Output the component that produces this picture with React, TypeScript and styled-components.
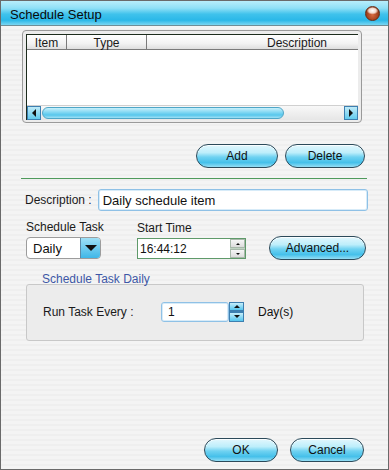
import React from 'react'
import styled, { createGlobalStyle } from 'styled-components'

const GlobalStyle = createGlobalStyle`
  html, body {
    margin: 0;
    padding: 0;
    background: #ffffff;
  }
  * {
    box-sizing: border-box;
  }
`

const Window = styled.div`
  width: 389px;
  height: 470px;
  display: flex;
  flex-direction: column;
  border: 1px solid #6a6a6a;
  font-family: 'Liberation Sans', Arial, sans-serif;
  font-size: 12px;
  color: #111;
  background: repeating-linear-gradient(
    180deg,
    #f4f4f4 0px,
    #f4f4f4 3px,
    #efefef 3px,
    #efefef 5px
  );
  overflow: hidden;
`

const TitleBar = styled.div`
  height: 25px;
  flex: none;
  display: flex;
  align-items: center;
  justify-content: space-between;
  padding: 2px 8px 0 9px;
  background: linear-gradient(
    180deg,
    #b8eefb 0%,
    #8fe0f6 30%,
    #3fc2ec 55%,
    #2bb8e8 80%,
    #7ad6f2 100%
  );
  border-bottom: 1px solid #6e8d96;
  font-size: 13px;
  color: #0a0a0a;
`

const CloseOrb = styled.div`
  width: 15px;
  height: 15px;
  border-radius: 50%;
  margin-top: -1px;
  background: radial-gradient(
      ellipse 6px 4px at 50% 28%,
      #ffffff 0%,
      #f3d9cc 60%,
      transparent 100%
    ),
    radial-gradient(circle at 50% 62%, #d86a40 0%, #a0401c 55%, #5e200c 100%);
  border: 1px solid #6a2c14;
`

const ListFrame = styled.div`
  margin: 4px 0 0 21px;
  width: 340px;
  height: 93px;
  padding: 3px 3px 2px 3px;
  border: 1px solid #9a9a9a;
  border-radius: 4px;
  background: #ececec;
  display: flex;
  flex-direction: column;
`

const ListInner = styled.div`
  flex: 1;
  display: flex;
  flex-direction: column;
  background: #fff;
  border-left: 1px solid #1c2b1c;
  border-top: 1px solid #1c2b1c;
  overflow: hidden;
`

const HeaderRow = styled.div`
  height: 15px;
  display: flex;
  background: linear-gradient(180deg, #ffffff 0%, #f2f2f2 60%, #dedede 100%);
  border-bottom: 1px solid #7a7a7a;
`

const HeaderCell = styled.div<{ w: number }>`
  width: ${(p) => p.w}px;
  flex: none;
  display: flex;
  align-items: flex-end;
  justify-content: center;
  line-height: 12px;
  border-right: 1px solid #7a7a7a;
  color: #1a1a1a;
  &:last-child {
    border-right: none;
  }
`

const ListBody = styled.div`
  flex: 1;
`

const ScrollBar = styled.div`
  height: 15px;
  display: flex;
  align-items: stretch;
  background: linear-gradient(180deg, #f8f8f8, #e6e6e6);
  border-top: 1px solid #d0d0d0;
`

const ArrowBtn = styled.div`
  width: 14px;
  display: flex;
  align-items: center;
  justify-content: center;
  background: linear-gradient(180deg, #bfeaf8, #62cbee);
  border: 1px solid #3d7fb0;
`

const Thumb = styled.div`
  width: 242px;
  margin: 1px 0 1px 1px;
  border-radius: 7px;
  border: 1px solid #4fa6c7;
  background: linear-gradient(180deg, #c9f0fb 0%, #7fd6f2 45%, #57c7ec 70%, #9fe0f5 100%);
`

const Track = styled.div`
  flex: 1;
`

const ButtonRow = styled.div`
  display: flex;
  justify-content: flex-end;
  gap: 7px;
  margin: 21px 23px 0 0;
`

const PillButton = styled.button<{ w: number }>`
  width: ${(p) => p.w}px;
  height: 24px;
  padding: 0;
  border: 1px solid #2c4a5a;
  border-radius: 12px;
  font-family: 'Liberation Sans', Arial, sans-serif;
  font-size: 12px;
  color: #111;
  background: linear-gradient(
    180deg,
    #e3f7fd 0%,
    #bdeefb 35%,
    #6fd2f1 55%,
    #45c0ea 80%,
    #94def5 100%
  );
  box-shadow: inset 0 1px 0 rgba(255, 255, 255, 0.8);
`

const Divider = styled.div`
  margin: 10px 21px 0 20px;
  height: 1px;
  background: #4f9a5c;
`

const DescRow = styled.div`
  display: flex;
  align-items: center;
  margin: 10px 20px 0 24px;
  gap: 6px;
`

const Label = styled.span`
  color: #1a1a1a;
  white-space: nowrap;
`

const TextInput = styled.div`
  flex: 1;
  height: 22px;
  display: flex;
  align-items: center;
  padding-left: 4px;
  background: #fff;
  border: 1px solid #8fc1e6;
  border-radius: 3px;
  box-shadow: inset 0 0 0 1px #d7ebf8;
  font-size: 13px;
`

const TaskRow = styled.div`
  display: flex;
  align-items: flex-end;
  margin: 9px 0 0 25px;
`

const Field = styled.div<{ w: number }>`
  width: ${(p) => p.w}px;
  display: flex;
  flex-direction: column;
  gap: 3px;
`

const Combo = styled.div`
  width: 75px;
  height: 22px;
  display: flex;
  border: 1px solid #9c9c9c;
  border-radius: 4px;
  background: #fff;
  overflow: hidden;
`

const ComboText = styled.div`
  flex: 1;
  display: flex;
  align-items: center;
  padding-left: 6px;
  font-size: 13px;
`

const ComboDrop = styled.div`
  width: 20px;
  display: flex;
  align-items: center;
  justify-content: center;
  background: linear-gradient(180deg, #9fe0f6, #3fb7e8);
  border-left: 1px solid #5c8aa8;
`

const TimeBox = styled.div`
  width: 109px;
  height: 21px;
  display: flex;
  border: 1px solid #5f9a6a;
  background: #fff;
`

const TimeText = styled.div`
  flex: 1;
  display: flex;
  align-items: center;
  padding-left: 2px;
`

const SpinCol = styled.div<{ blue?: boolean }>`
  width: 15px;
  display: flex;
  flex-direction: column;
  gap: 1px;
  background: ${(p) => (p.blue ? '#3d7fb0' : '#bfd3c2')};
`

const SpinHalf = styled.div<{ blue?: boolean }>`
  flex: 1;
  display: flex;
  align-items: center;
  justify-content: center;
  background: ${(p) =>
    p.blue
      ? 'linear-gradient(180deg, #c6eefb, #55c6ee)'
      : 'linear-gradient(180deg, #f6f6f6, #dcdcdc)'};
  border: 1px solid ${(p) => (p.blue ? '#3d7fb0' : '#a8b8aa')};
`

const AdvancedWrap = styled.div`
  margin-left: 23px;
  margin-bottom: -1px;
`

const Group = styled.div`
  position: relative;
  margin: 25px 0 0 25px;
  width: 338px;
  height: 57px;
  border: 1px solid #c8c8c8;
  border-radius: 3px;
  background: #ececec;
  display: flex;
  align-items: center;
  padding: 0 0 2px 16px;
`

const Legend = styled.span`
  position: absolute;
  left: 15px;
  top: -13px;
  color: #3d57a6;
`

const RunLabel = styled.span`
  width: 118px;
  color: #1a1a1a;
`

const NumberBox = styled.div`
  display: flex;
  height: 20px;
`

const NumberInput = styled.div`
  width: 68px;
  display: flex;
  align-items: center;
  padding-left: 6px;
  background: #fff;
  border: 1px solid #8fc1e6;
  border-radius: 3px;
  box-shadow: inset 0 0 0 1px #d7ebf8;
`

const Unit = styled.span`
  margin-left: 14px;
`

const Footer = styled.div`
  margin-top: auto;
  margin-bottom: 7px;
  display: flex;
  justify-content: flex-end;
  gap: 12px;
  padding-right: 24px;
`

const Tri = ({ dir, size = 4 }: { dir: 'up' | 'down' | 'left' | 'right'; size?: number }) => {
  const s = size
  const pts = {
    up: `0,${s} ${s},0 ${s * 2},${s}`,
    down: `0,0 ${s * 2},0 ${s},${s}`,
    left: `${s},0 ${s},${s * 2} 0,${s}`,
    right: `0,0 0,${s * 2} ${s},${s}`,
  }[dir]
  const w = dir === 'up' || dir === 'down' ? s * 2 : s
  const h = dir === 'up' || dir === 'down' ? s : s * 2
  return (
    <svg width={w} height={h} viewBox={`0 0 ${w} ${h}`}>
      <polygon points={pts} fill='#111' />
    </svg>
  )
}

export default function App() {
  return (
    <>
      <GlobalStyle />
      <Window>
        <TitleBar>
          <span>Schedule Setup</span>
          <CloseOrb />
        </TitleBar>

        <ListFrame>
          <ListInner>
            <HeaderRow>
              <HeaderCell w={40}>Item</HeaderCell>
              <HeaderCell w={80}>Type</HeaderCell>
              <HeaderCell w={300}>Description</HeaderCell>
            </HeaderRow>
            <ListBody />
            <ScrollBar>
              <ArrowBtn>
                <Tri dir='left' />
              </ArrowBtn>
              <Thumb />
              <Track />
              <ArrowBtn>
                <Tri dir='right' />
              </ArrowBtn>
            </ScrollBar>
          </ListInner>
        </ListFrame>

        <ButtonRow>
          <PillButton w={82}>Add</PillButton>
          <PillButton w={80}>Delete</PillButton>
        </ButtonRow>

        <Divider />

        <DescRow>
          <Label>Description :</Label>
          <TextInput>Daily schedule item</TextInput>
        </DescRow>

        <TaskRow>
          <Field w={111}>
            <Label>Schedule Task</Label>
            <Combo>
              <ComboText>Daily</ComboText>
              <ComboDrop>
                <Tri dir='down' size={6} />
              </ComboDrop>
            </Combo>
          </Field>
          <Field w={109}>
            <Label>Start Time</Label>
            <TimeBox>
              <TimeText>16:44:12</TimeText>
              <SpinCol>
                <SpinHalf>
                  <Tri dir='up' size={2} />
                </SpinHalf>
                <SpinHalf>
                  <Tri dir='down' size={2} />
                </SpinHalf>
              </SpinCol>
            </TimeBox>
          </Field>
          <AdvancedWrap>
            <PillButton w={97}>Advanced...</PillButton>
          </AdvancedWrap>
        </TaskRow>

        <Group>
          <Legend>Schedule Task Daily</Legend>
          <RunLabel>Run Task Every :</RunLabel>
          <NumberBox>
            <NumberInput>1</NumberInput>
            <SpinCol blue>
              <SpinHalf blue>
                <Tri dir='up' size={3} />
              </SpinHalf>
              <SpinHalf blue>
                <Tri dir='down' size={3} />
              </SpinHalf>
            </SpinCol>
          </NumberBox>
          <Unit>Day(s)</Unit>
        </Group>

        <Footer>
          <PillButton w={74}>OK</PillButton>
          <PillButton w={74}>Cancel</PillButton>
        </Footer>
      </Window>
    </>
  )
}
